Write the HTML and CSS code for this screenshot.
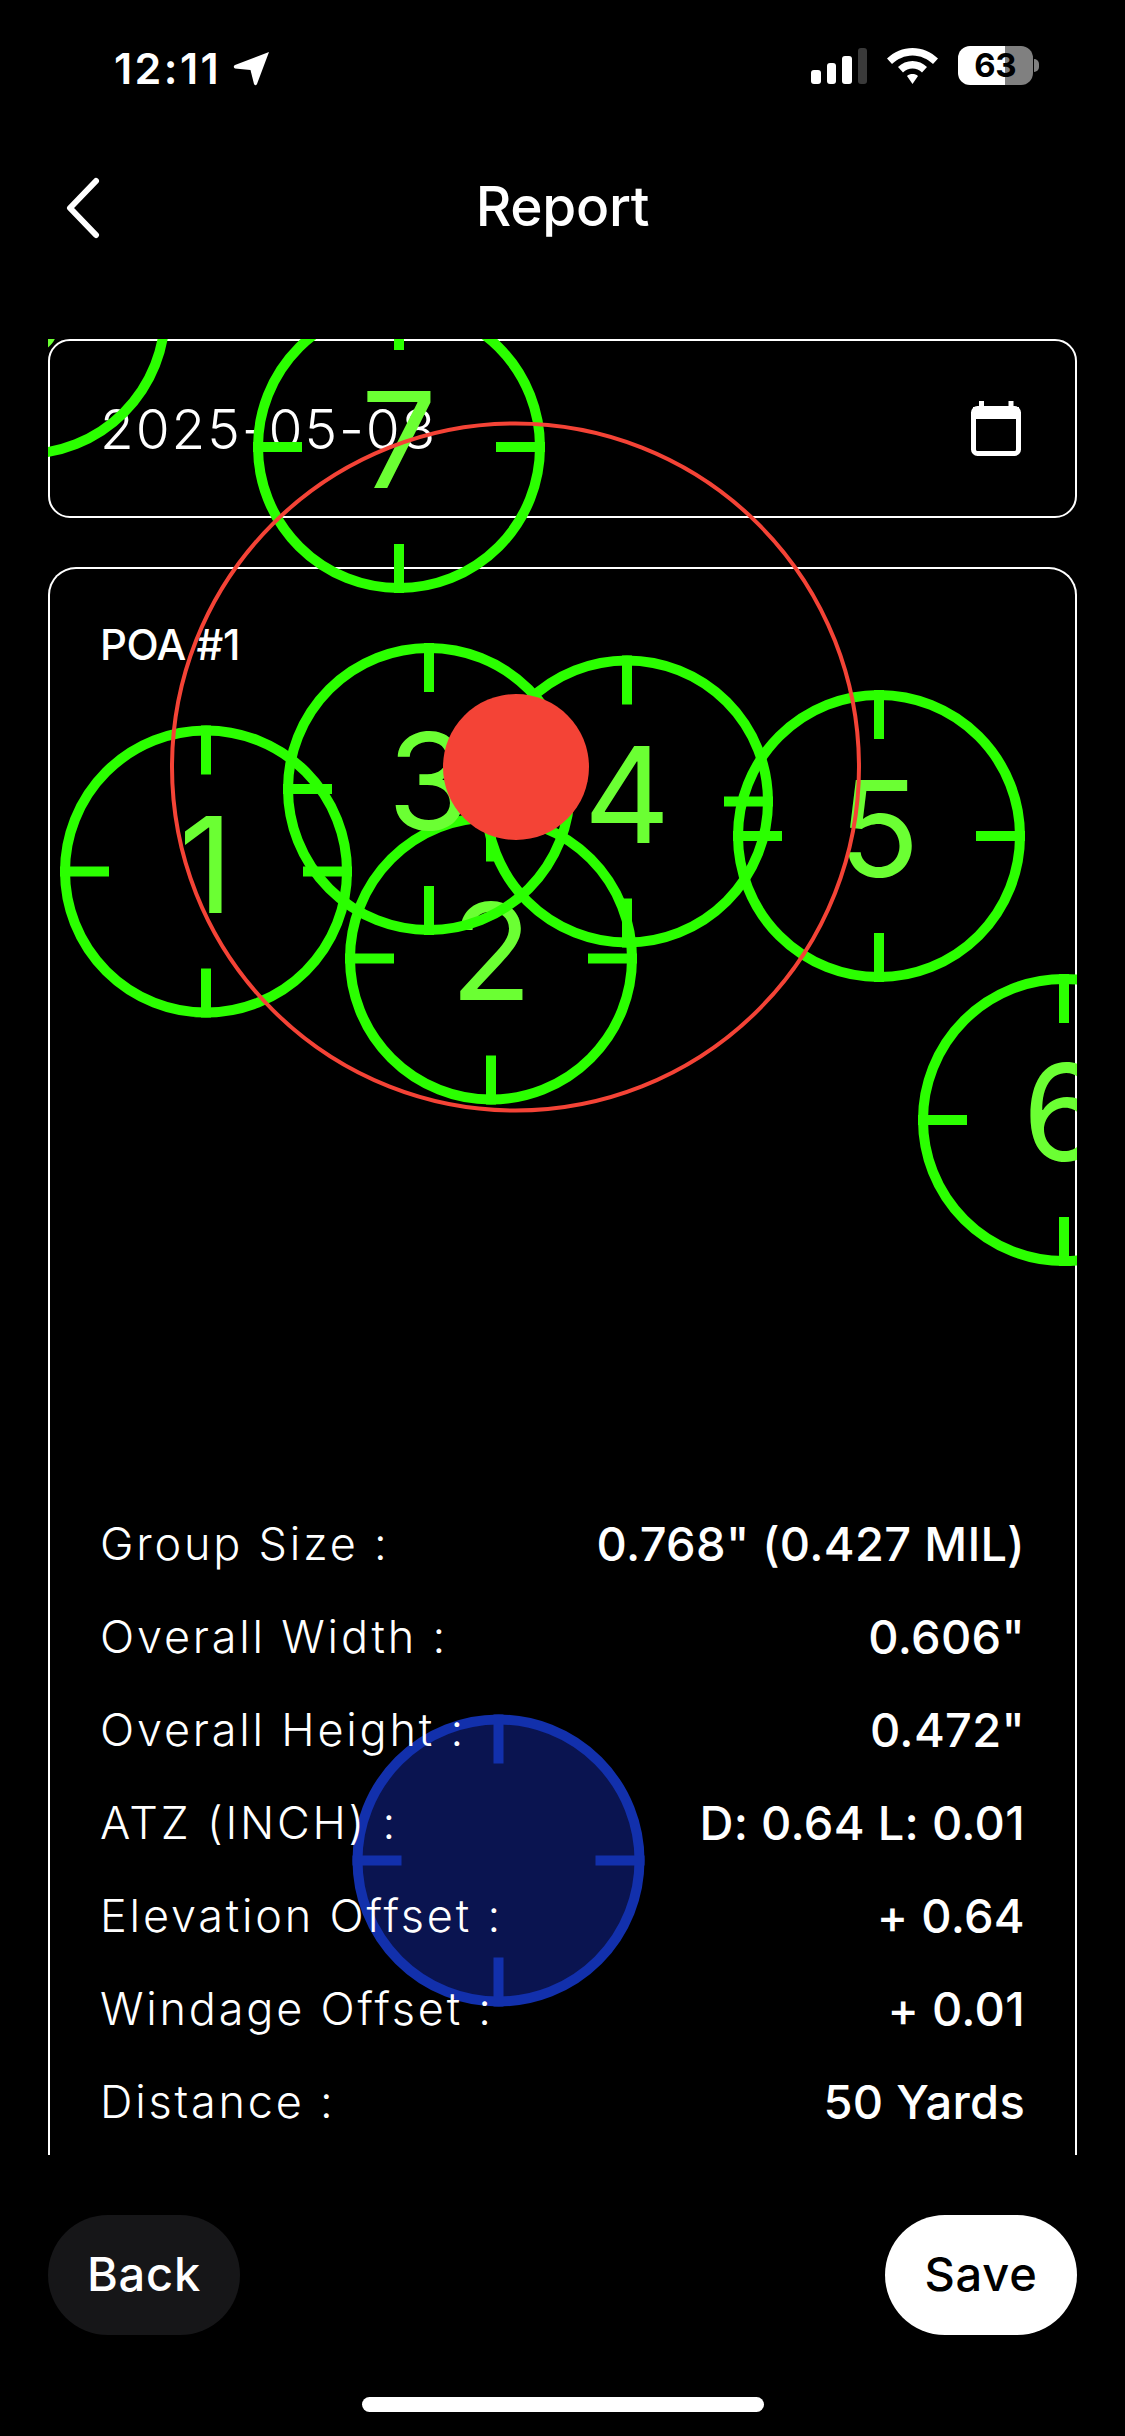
FILE: index.html
```html
<!DOCTYPE html>
<html lang="en">
<head>
    <meta charset="UTF-8">
    <meta name="viewport" content="width=device-width, initial-scale=1.0">
    <title>Report</title>
    <link rel="stylesheet" href="styles.css">
</head>
<body>
    <div class="screen">
        <!-- Status bar -->
        <div class="status-bar">
            <div class="status-time">
                <span>12:11</span>
                <svg class="status-arrow" viewBox="0 0 37 35"><path d="M36 1 L24 33 Q22.500 35.500 21 33 L17.500 19 L2 17.500 Q-.5 15.500 2 14 Z"/></svg>
            </div>
            <div class="status-icons">
                <div class="signal">
                    <span class="bar bar-1"></span>
                    <span class="bar bar-2"></span>
                    <span class="bar bar-3"></span>
                    <span class="bar bar-4"></span>
                </div>
                <svg class="wifi" viewBox="0 0 51 36"><path d="M25.500 0 C35 0 44 4 51 10.500 L46 16 C40.500 11 33.500 7.500 25.500 7.500 C17.500 7.500 10.500 11 5 16 L0 10.500 C7 4 16 0 25.500 0 Z M25.500 13 C31 13 36 15 40 19 L35 24.500 C32.500 22 29 20.500 25.500 20.500 C22 20.500 18.500 22 16 24.500 L11 19 C15 15 20 13 25.500 13 Z M25.500 26 C27.500 26 29.500 26.500 31 28 L25.500 36 L20 28 C21.500 26.500 23.500 26 25.500 26 Z"/></svg>
                <div class="battery">
                    <div class="battery-body"><span>63</span></div>
                    <span class="battery-nub"></span>
                </div>
            </div>
        </div>

        <!-- Header -->
        <div class="header">
            <svg class="back-icon" viewBox="0 0 36 62"><path d="M31 4 L5 31 L31 58"/></svg>
            <h1>Report</h1>
        </div>

        <!-- Date -->
        <div class="date-field">
            <span>2025-05-08</span>
            <svg class="calendar" viewBox="0 0 50 55">
                <rect x="2.500" y="7.500" width="45" height="45" rx="4" fill="none" stroke="#fff" stroke-width="5"/>
                <rect x="2" y="6" width="46" height="12" fill="#fff"/>
                <rect x="8" y="0" width="5" height="8" fill="#fff"/>
                <rect x="37.500" y="0" width="5" height="8" fill="#fff"/>
            </svg>
        </div>

        <!-- Report card -->
        <div class="card">
            <div class="card-title">POA #1</div>
            <div class="rows">
                <div class="row"><span class="label">Group Size :</span><span class="value">0.768" (0.427 MIL)</span></div>
                <div class="row"><span class="label">Overall Width :</span><span class="value">0.606"</span></div>
                <div class="row"><span class="label">Overall Height :</span><span class="value">0.472"</span></div>
                <div class="row"><span class="label">ATZ (INCH) :</span><span class="value">D: 0.64 L: 0.01</span></div>
                <div class="row"><span class="label">Elevation Offset :</span><span class="value">+ 0.64</span></div>
                <div class="row"><span class="label">Windage Offset :</span><span class="value">+ 0.01</span></div>
                <div class="row"><span class="label">Distance :</span><span class="value">50 Yards</span></div>
            </div>
        </div>

        <!-- Shots drawn over the date and card, page coordinates -->
        <svg class="target" viewBox="48 339 1029 1816">
            <defs>
                <g id="reticle">
                    <circle r="141"/>
                    <path d="M0 -146 V-97 M0 146 V97 M-146 0 H-97 M146 0 H97"/>
                </g>
            </defs>
            <g class="zero" transform="translate(498.500 1860.500)"><use href="#reticle"/></g>
            <g class="shot" transform="translate(206 871.500)"><use href="#reticle"/><text y="41">1</text></g>
            <g class="shot" transform="translate(491 958.500)"><use href="#reticle"/><text y="41">2</text></g>
            <g class="shot" transform="translate(429 789)"><use href="#reticle"/><text y="41">3</text></g>
            <g class="shot" transform="translate(627 801.500)"><use href="#reticle"/><text y="41">4</text></g>
            <g class="shot" transform="translate(879 836)"><use href="#reticle"/><text y="41">5</text></g>
            <g class="shot" transform="translate(1064 1120)"><use href="#reticle"/><text y="41">6</text></g>
            <g class="shot" transform="translate(399 447)"><use href="#reticle"/><text y="41">7</text></g>
            <g class="shot" transform="translate(24 313)"><use href="#reticle"/><text y="41">8</text></g>
            <circle class="group-ring" cx="515.500" cy="767" r="343.500"/>
            <circle class="group-dot" cx="516" cy="767" r="73"/>
        </svg>

        <!-- Footer -->
        <div class="footer">
            <button class="btn btn-back">Back</button>
            <button class="btn btn-save">Save</button>
        </div>
        <div class="home-indicator"></div>
    </div>
</body>
</html>
```

FILE: styles.css
```css
* {
    box-sizing: border-box;
}
body {
    margin: 0;
    background-color: #000;
    color: #fff;
    font-family: Inter, "Liberation Sans", sans-serif;
}
.screen {
    position: relative;
    width: 1125px;
    height: 2436px;
    overflow: hidden;
    display: flex;
    flex-direction: column;
}

/* Status bar */
.status-bar {
    height: 136px;
    padding: 46px 86px 0 114px;
    display: flex;
    justify-content: space-between;
    align-items: flex-start;
}
.status-time {
    display: flex;
    align-items: center;
    gap: 12px;
    font-size: 43px;
    font-weight: 600;
    line-height: 44px;
    letter-spacing: 2.400px;
}
.status-arrow {
    width: 37px;
    height: 35px;
    fill: #fff;
}
.status-icons {
    display: flex;
    align-items: flex-start;
    gap: 20px;
}
.signal {
    margin-top: 2px;
    width: 56px;
    height: 36px;
    display: flex;
    align-items: flex-end;
    gap: 6px;
}
.bar {
    width: 9.500px;
    border-radius: 3px;
    background-color: #fff;
}
.bar-1 { height: 14px; }
.bar-2 { height: 21px; }
.bar-3 { height: 28px; }
.bar-4 { height: 36px; background-color: #3a3a3a; }
.wifi {
    margin-top: 2px;
    width: 51px;
    height: 36px;
    fill: #fff;
}
.battery {
    display: flex;
    align-items: center;
    gap: 1px;
}
.battery-body {
    width: 75px;
    height: 39px;
    border-radius: 12px;
    background: linear-gradient(to right, #fff 47px, #808080 47px);
    color: #000;
    font-size: 33px;
    font-weight: 700;
    line-height: 39px;
    text-align: center;
    font-variant-numeric: tabular-nums;
}
.battery-nub {
    width: 5px;
    height: 13px;
    border-radius: 0 6px 6px 0;
    background-color: #808080;
}

/* Header */
.header {
    position: relative;
    height: 143px;
    padding-bottom: 4px;
    display: flex;
    align-items: center;
    justify-content: center;
}
.header h1 {
    margin: 0;
    font-size: 55px;
    font-weight: 500;
    letter-spacing: -.3px;
}
.back-icon {
    position: absolute;
    left: 65px;
    top: 41px;
    width: 36px;
    height: 62px;
    fill: none;
    stroke: #fff;
    stroke-width: 6;
    stroke-linecap: round;
    stroke-linejoin: round;
}

/* Date */
.date-field {
    height: 179px;
    margin: 60px 48px 0;
    padding: 0 54px 0 50px;
    border: 2px solid #fff;
    border-radius: 22px;
    display: flex;
    align-items: center;
    justify-content: space-between;
    font-size: 55px;
    font-weight: 300;
    letter-spacing: 1.900px;
}
.calendar {
    width: 50px;
    height: 55px;
}

/* Card */
.card {
    height: 1588px;
    margin: 49px 48px 0;
    padding: 51px 50px 0;
    border: 2px solid #fff;
    border-bottom: none;
    border-radius: 28px 28px 0 0;
    display: flex;
    flex-direction: column;
    justify-content: space-between;
}
.card-title {
    font-size: 42px;
    font-weight: 500;
    line-height: 50px;
    letter-spacing: -.5px;
}
.rows {
    position: relative;
    z-index: 2;
    padding-bottom: 7px;
}
.row {
    height: 93px;
    display: flex;
    justify-content: space-between;
    align-items: center;
    font-size: 45px;
}
.label {
    font-weight: 300;
    letter-spacing: 2.800px;
}
.value {
    font-size: 47px;
    font-weight: 500;
    letter-spacing: .3px;
}

/* Target overlay */
.target {
    position: absolute;
    left: 48px;
    top: 339px;
    width: 1029px;
    height: 1816px;
    z-index: 1;
}
.shot {
    fill: none;
    stroke: #2bff00;
    stroke-width: 10;
}
.shot text {
    fill: #6bff33;
    stroke: none;
    font-size: 134px;
    font-weight: 400;
    text-anchor: middle;
}
.zero {
    fill: #0a1450;
    stroke: #1230ac;
    stroke-width: 10;
}
.group-ring {
    fill: none;
    stroke: #f44336;
    stroke-width: 4;
}
.group-dot {
    fill: #f44336;
}

/* Footer */
.footer {
    margin: 60px 48px 0;
    display: flex;
    justify-content: space-between;
}
.btn {
    width: 192px;
    height: 120px;
    border: none;
    border-radius: 60px;
    font-family: inherit;
    font-size: 47px;
    font-weight: 500;
    letter-spacing: .8px;
    padding: 0 0 4px;
}
.btn-back {
    background-color: #161618;
    color: #fff;
}
.btn-save {
    background-color: #fff;
    color: #000;
}
.home-indicator {
    width: 402px;
    height: 15px;
    margin: 62px auto 0;
    border-radius: 8px;
    background-color: #fff;
}
```
